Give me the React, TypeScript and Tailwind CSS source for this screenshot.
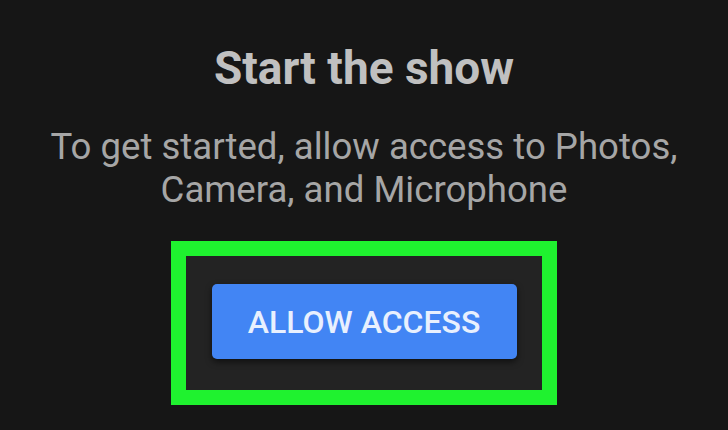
const App = () => {
  return (
    <div
      className="w-[728px] h-[430px] bg-[#161616] flex flex-col items-center overflow-hidden"
      style={{ fontFamily: "Roboto, 'Noto Sans', sans-serif" }}
    >
      <h1 className="mt-[41px] text-[46px] leading-[54px] font-bold text-[#c0c0c0]">
        Start the show
      </h1>
      <p className="mt-[30px] text-[36.6px] leading-[43px] text-[#a6a6a6] text-center">
        To get started, allow access to Photos,
        <br />
        Camera, and Microphone
      </p>
      <div className="mt-[30px] w-[386px] h-[164px] border-[15px] border-[#1ff22f] bg-[#232323] flex items-center justify-center">
        <button className="w-[305px] h-[75px] rounded-[5px] bg-[#4285f4] text-[#e8f0fe] text-[32px] font-medium shadow-[0_3px_6px_rgba(0,0,0,0.55)] mb-[3px]">
          ALLOW ACCESS
        </button>
      </div>
    </div>
  );
};

export default App;
